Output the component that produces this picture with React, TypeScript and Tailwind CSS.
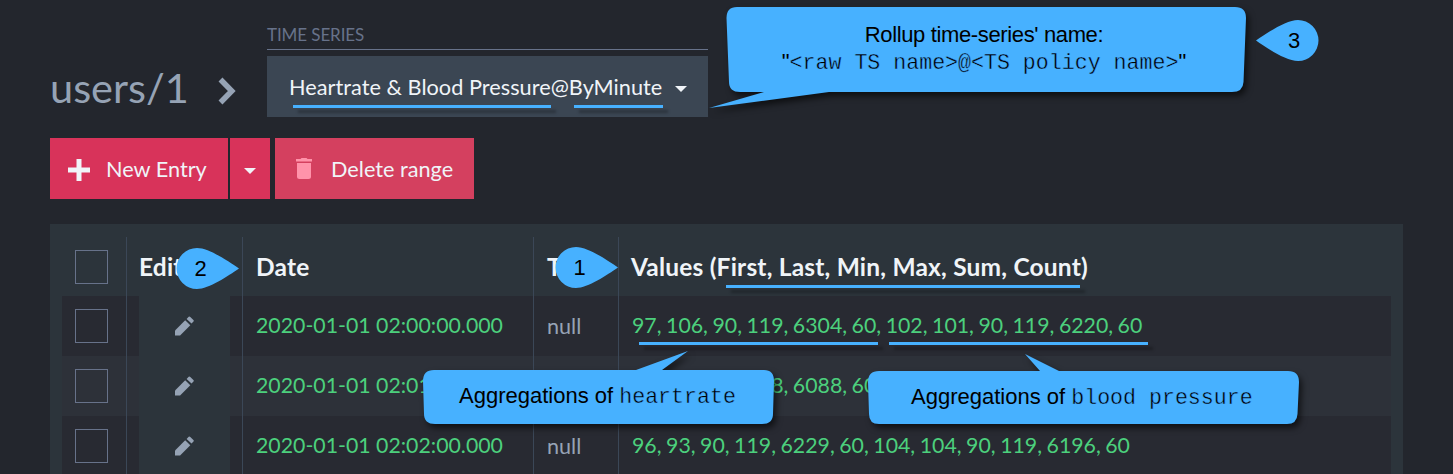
import React from "react";

const rows = [
  { date: "2020-01-01 02:00:00.000", tag: "null", values: "97, 106, 90, 119, 6304, 60, 102, 101, 90, 119, 6220, 60" },
  { date: "2020-01-01 02:01:00.000", tag: "null", values: "93, 101, 90, 118, 6088, 60, 103, 99, 90, 119, 6235, 60" },
  { date: "2020-01-01 02:02:00.000", tag: "null", values: "96, 93, 90, 119, 6229, 60, 104, 104, 90, 119, 6196, 60" },
];

function Checkbox() {
  return <span className="block h-[34px] w-[33px] border border-[#67728a]" />;
}

function Pencil() {
  return (
    <svg width="19" height="20" viewBox="0 0 19 20" className="fill-[#96a3b5]">
      <path d="M0 14.400L10.200 4.200 15.300 9.300 5.100 19.500H0Z" />
      <path d="M11.600 2.900 13.700 .8Q14.500 .2 15.300 .9L18.400 4Q19.200 4.700 18.500 5.500L16.500 7.600Z" />
    </svg>
  );
}

function Caret({ className }: { className: string }) {
  return (
    <svg width="12" height="6" viewBox="0 0 12 6" className={className}>
      <path d="M0 0H12L6 6Z" fill="#f0f4f8" />
    </svg>
  );
}

function Underline({ className }: { className: string }) {
  return <span className={"absolute h-[3px] bg-[#47b1ff] shadow-[5px_5px_3px_rgba(0,0,0,0.28)] " + className} />;
}

function Marker({ n, left, className }: { n: string; left?: boolean; className: string }) {
  return (
    <div className={"absolute h-[41px] w-[63px] font-['Liberation_Sans',sans-serif] text-[22px] leading-[41px] text-black " + className}>
      <svg width="63" height="41" viewBox="0 0 63 41" className={left ? "absolute inset-0 -scale-x-100" : "absolute inset-0"}>
        <path d="M63 20.5C52 13 33 0 21 0A20.5 20.5 0 0 0 21 41C33 41 52 28 63 20.5Z" fill="#47b1ff" />
      </svg>
      <span className={left ? "absolute left-[32px] top-0" : "absolute left-[18.5px] top-0"}>{n}</span>
    </div>
  );
}

function Callout({ d, width, height, className, children }: { d: string; width: number; height: number; className: string; children: React.ReactNode }) {
  return (
    <div className={"absolute font-['Liberation_Sans',sans-serif] text-[22px] text-black " + className}>
      <svg width={width} height={height} className="absolute inset-0 overflow-visible drop-shadow-[3px_4px_3px_rgba(0,0,0,0.6)]">
        <path d={d} fill="#47b1ff" />
      </svg>
      {children}
    </div>
  );
}

const mono = "font-['Liberation_Mono',monospace] text-[21.6px] [-webkit-text-stroke:0.4px_#47b1ff]";

export default function App() {
  return (
    <div className="relative h-[474px] w-[1453px] overflow-hidden bg-[#23262d] pl-[50px] font-[Lato,sans-serif] text-[21.7px] text-[#f0f4f8]">
      <header className="flex h-[138px]">
        <h1 className="w-[168px] pt-[60px] text-[41.5px] leading-[54px] text-[#96a3b5]">users/1</h1>
        <svg width="18" height="28" viewBox="0 0 18 28" className="mt-[77px]">
          <path d="M2.500 2.500 13.800 14 2.500 25.500" fill="none" stroke="#96a3b5" strokeWidth="5.500" />
        </svg>
        <div className="ml-[31px] w-[441px]">
          <div className="h-[50px] border-b border-[#67728a] pt-[24px] text-[17px] leading-[22px] text-[#67728a]">
            <span className="inline-block whitespace-nowrap tracking-[-0.1px]">TIME SERIES</span>
          </div>
          <div className="mt-[6px] flex h-[61px] items-center bg-[#3b4653] pl-[22px]">
            <span className="whitespace-nowrap pt-px tracking-[0.03px]">Heartrate &amp; Blood Pressure@ByMinute</span>
            <Caret className="ml-[13px] mt-[4px]" />
          </div>
        </div>
      </header>

      <div className="flex h-[61px]">
        <button className="flex w-[178px] items-center bg-[#d8335a] pl-[18px]">
          <svg width="22" height="22" viewBox="0 0 22 22" className="mt-[2px]">
            <path d="M8.5 0H13.5V8.5H22V13.5H13.5V22H8.5V13.5H0V8.5H8.5Z" fill="#f0f4f8" />
          </svg>
          <span className="ml-4 whitespace-nowrap pt-px">New Entry</span>
        </button>
        <button className="ml-[2px] flex w-[40px] items-center justify-center bg-[#d8335a]">
          <Caret className="mt-[4px]" />
        </button>
        <button className="ml-[5px] flex w-[199px] items-center bg-[#d4405f] pl-[21px]">
          <svg width="16" height="21" viewBox="0 0 16 21" fill="#ff93aa">
            <path d="M0 1H4.5L5.5 0H10.5L11.5 1H16V3.5H0Z" />
            <path d="M1 5H15V18.5Q15 21 12.5 21H3.5Q1 21 1 18.5Z" />
          </svg>
          <span className="ml-[19px] whitespace-nowrap pt-px">Delete range</span>
        </button>
      </div>

      <main className="mt-[25px] h-[260px] w-[1353px] bg-[#2c343b] px-3 pt-3">
        <div className="grid h-[60px] grid-cols-[77px_103px_14px_290px_85px_1fr] text-[24.5px] font-bold tracking-[0.2px]">
          <div className="pl-[13px] pt-[14px]"><Checkbox /></div>
          <div className="flex items-center pt-[3px]">Edit</div>
          <div />
          <div className="flex items-center pt-[3px]">Date</div>
          <div className="flex items-center pl-px pt-[3px]">Tag</div>
          <div className="flex items-center pt-[3px]"><span className="whitespace-nowrap">Values (First, Last, Min, Max, Sum, Count)</span></div>
        </div>
        {rows.map((row, i) => (
          <div
            key={row.date}
            className={(i % 2 ? "bg-[#2d3139]" : "bg-[#282a32]") + " grid h-[60px] grid-cols-[77px_91px_26px_290px_86px_1fr] items-center text-[21.3px] text-[#4cd07d]"}
          >
            <div className="pl-[13px]"><Checkbox /></div>
            <div className="flex h-[60px] items-center justify-center bg-[#2c343b]"><Pencil /></div>
            <div />
            <span className="whitespace-nowrap">{row.date}</span>
            <span className="pl-px text-[21.6px] text-[#96a3b5]">{row.tag}</span>
            <span className="whitespace-nowrap [word-spacing:-0.95px]">{row.values}</span>
          </div>
        ))}
      </main>

      <span className="absolute left-[126px] top-[237px] h-[237px] w-px bg-[#3b4757]" />
      <span className="absolute left-[242px] top-[237px] h-[237px] w-px bg-[#3b4757]" />
      <span className="absolute left-[533px] top-[237px] h-[237px] w-px bg-[#3b4757]" />
      <span className="absolute left-[618px] top-[237px] h-[237px] w-px bg-[#3b4757]" />

      <Underline className="left-[293px] top-[105px] w-[258px]" />
      <Underline className="left-[574px] top-[105px] w-[89px]" />
      <Underline className="left-[726px] top-[285px] w-[354px]" />
      <Underline className="left-[639px] top-[342px] w-[239px]" />
      <Underline className="left-[889px] top-[342px] w-[259px]" />

      <Callout
        className="left-[709px] top-[7px] h-[101px] w-[537px]"
        width={537}
        height={101}
        d="M28 0H526Q537 0 537 11L534.500 75Q534 85 523 85H120L0 101 55 85H31Q20 85 20 75L17.500 11Q17.500 0 28 0Z"
      >
        <div className="absolute left-[16px] top-[15px] w-[518px] text-center">
          <div className="leading-[26px] tracking-[-0.36px]">Rollup time-series' name:</div>
          <div className="whitespace-nowrap pt-px leading-[26px]">"<span className={mono}>&lt;raw TS name&gt;@&lt;TS policy name&gt;</span>"</div>
        </div>
      </Callout>
      <Callout
        className="left-[423px] top-[351px] h-[73px] w-[352px]"
        width={352}
        height={73}
        d="M11 19H213L265 0 239 19H341Q351 19 351 30L350 63Q350 73 339 73H12Q1 73 1 63L0 30Q0 19 11 19Z"
      >
        <div className="absolute left-[36px] top-[31px] whitespace-nowrap leading-[28px]">
          Aggregations of <span className={mono}>heartrate</span>
        </div>
      </Callout>
      <Callout
        className="left-[868px] top-[354px] h-[70px] w-[431px]"
        width={431}
        height={70}
        d="M11 17H172L157 0 191 17H420Q431 17 431 28L429.500 60Q429 70 419 70H11Q1 70 1 60L0 28Q0 17 11 17Z"
      >
        <div className="absolute left-[43px] top-[29px] whitespace-nowrap leading-[28px]">
          Aggregations of <span className={mono}>blood pressure</span>
        </div>
      </Callout>

      <Marker n="1" className="left-[555px] top-[247px]" />
      <Marker n="2" className="left-[176px] top-[248px]" />
      <Marker n="3" left className="left-[1256px] top-[20px]" />
    </div>
  );
}
